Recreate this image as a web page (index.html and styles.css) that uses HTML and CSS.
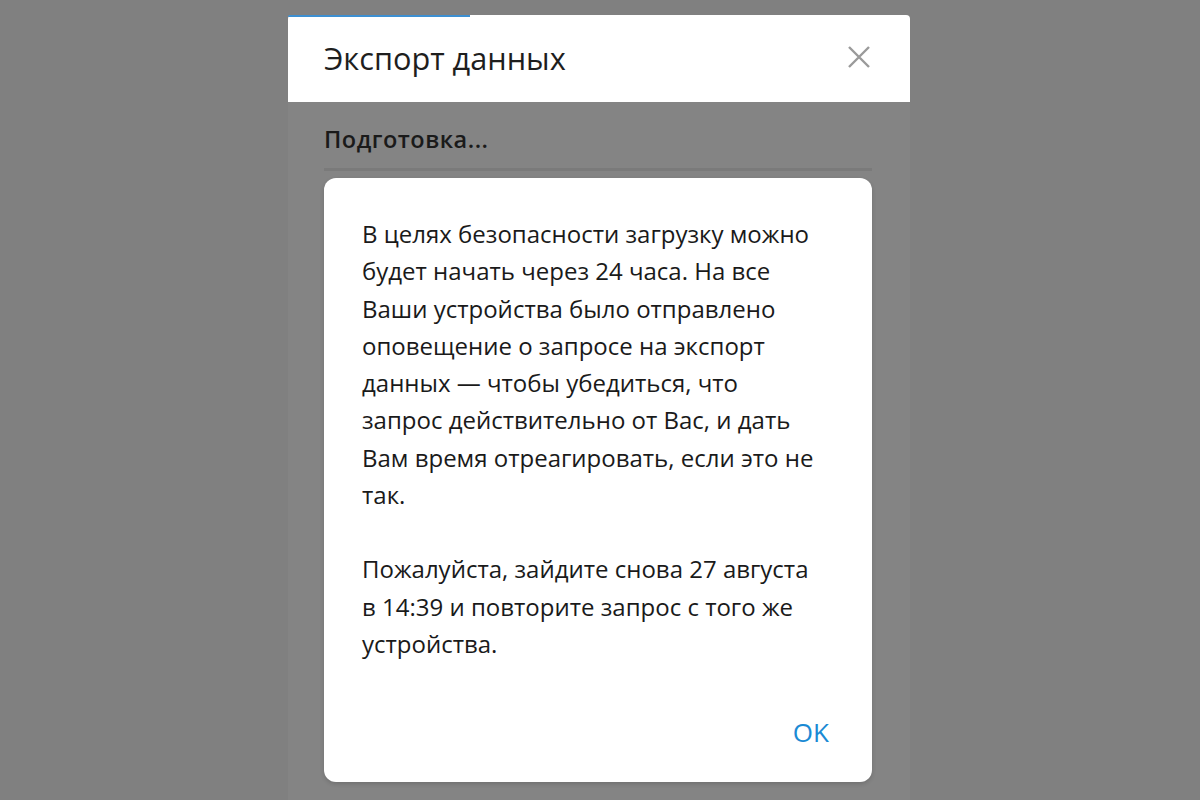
FILE: index.html
```html
<!DOCTYPE html>
<html lang="ru">
<head>
<meta charset="utf-8">
<link rel="stylesheet" href="styles.css">
</head>
<body>
<div class="stage">
  <div class="dialog">
    <div class="header">
      <div class="progress"></div>
      <h1 class="title">Экспорт данных</h1>
      <button class="close" aria-label="Закрыть">
        <svg width="24" height="24" viewBox="0 0 24 24"><path d="M2 2 L22 22 M22 2 L2 22" stroke="#9a9a9a" stroke-width="2.4" fill="none"/></svg>
      </button>
    </div>
    <div class="body">
      <div class="status">Подготовка...</div>
      <div class="divider"></div>
      <div class="box">
        <p>В целях безопасности загрузку можно будет начать через 24 часа. На все Ваши устройства было отправлено оповещение о запросе на экспорт данных — чтобы убедиться, что запрос действительно от Вас, и дать Вам время отреагировать, если это не так.</p>
        <p>Пожалуйста, зайдите снова 27 августа в 14:39 и повторите запрос с того же устройства.</p>
        <div class="actions"><button class="ok">OK</button></div>
      </div>
    </div>
  </div>
</div>
</body>
</html>
```
FILE: styles.css
```css
html, body {
  margin: 0;
  padding: 0;
  width: 1200px;
  height: 800px;
  overflow: hidden;
  background: #808080;
  font-family: "Open Sans", "Noto Sans", sans-serif;
}
.stage {
  display: flex;
  padding-top: 15px;
  padding-left: 288px;
}
.dialog {
  width: 622px;
  height: 785px;
  display: flex;
  flex-direction: column;
}
.header {
  position: relative;
  height: 87px;
  background: #ffffff;
  border-radius: 4px 4px 0 0;
  display: flex;
  align-items: center;
  justify-content: space-between;
  padding: 0 39px 0 36px;
  box-sizing: border-box;
}
.progress {
  position: absolute;
  left: 0;
  top: 0;
  width: 182px;
  height: 2px;
  background: #3d8fd1;
  border-radius: 4px 0 0 0;
}
.title {
  margin: 0;
  font-size: 30.7px;
  font-weight: 400;
  color: #1e1e1e;
  line-height: 40px;
  margin-top: -2px;
}
.close {
  border: 0;
  background: none;
  padding: 0;
  width: 24px;
  height: 24px;
  display: flex;
  margin-top: -4px;
}
.body {
  flex: 1;
  background: #848484;
  padding: 0 38px 0 36px;
  display: flex;
  flex-direction: column;
}
.status {
  margin-top: 22px;
  font-size: 23.5px;
  font-weight: 600;
  letter-spacing: 0.5px;
  color: #1a1a1a;
  line-height: 30px;
}
.divider {
  margin-top: 14px;
  height: 3px;
  background: #7a7a7a;
}
.box {
  margin-top: 7px;
  background: #ffffff;
  border-radius: 12px;
  height: 604px;
  box-sizing: border-box;
  padding: 37px 48px 0 38px;
  display: flex;
  flex-direction: column;
  box-shadow: 0 2px 4px rgba(0,0,0,0.15);
}
.box p {
  margin: 0 0 37px 0;
  font-size: 24px;
  line-height: 37.3px;
  color: #1a1a1a;
}
.actions {
  margin-top: auto;
  display: flex;
  justify-content: flex-end;
  padding-bottom: 32px;
  margin-right: -5px;
}
.ok {
  border: 0;
  background: none;
  font-family: inherit;
  font-size: 26px;
  color: #1a8ad4;
  padding: 0;
}
```
